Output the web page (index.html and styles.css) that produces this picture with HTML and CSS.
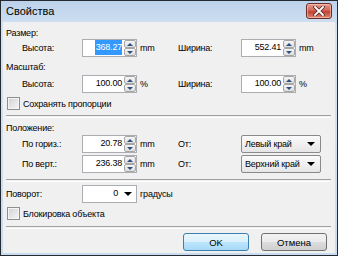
FILE: index.html
```html
<!DOCTYPE html>
<html lang="ru">
  <head>
    <meta charset="UTF-8" />
    <title>Свойства</title>
    <link rel="stylesheet" href="styles.css">
  </head>
  <body>
    <div class="window">
      <div class="titlebar">
        <span class="title">Свойства</span>
        <div class="close">
          <svg width="12" height="10" viewBox="0 0 12 10">
            <path d="M2 1 L10 9 M10 1 L2 9" stroke="#5a2a26" stroke-width="3.4" stroke-linecap="square" />
            <path d="M2 1 L10 9 M10 1 L2 9" stroke="#fff" stroke-width="1.8" stroke-linecap="square" />
          </svg>
        </div>
      </div>

      <div class="content">
        <div class="group">Размер:</div>
        <div class="row">
          <span class="label">Высота:</span>
          <div class="spin">
            <div class="field"><span class="sel">368.27</span></div>
            <div class="arrows"><span class="btn up"></span><span class="btn down"></span></div>
          </div>
          <span class="unit">mm</span>
          <span class="label">Ширина:</span>
          <div class="spin">
            <div class="field">552.41</div>
            <div class="arrows"><span class="btn up"></span><span class="btn down"></span></div>
          </div>
          <span class="unit">mm</span>
        </div>

        <div class="group gap4">Масштаб:</div>
        <div class="row gap2">
          <span class="label">Высота:</span>
          <div class="spin">
            <div class="field">100.00</div>
            <div class="arrows"><span class="btn up"></span><span class="btn down"></span></div>
          </div>
          <span class="unit">%</span>
          <span class="label">Ширина:</span>
          <div class="spin">
            <div class="field">100.00</div>
            <div class="arrows"><span class="btn up"></span><span class="btn down"></span></div>
          </div>
          <span class="unit">%</span>
        </div>

        <label class="check gap4"><span class="box"></span>Сохранять пропорции</label>

        <div class="sep"></div>

        <div class="group gap4">Положение:</div>
        <div class="row gap1">
          <span class="label">По гориз.:</span>
          <div class="spin">
            <div class="field">20.78</div>
            <div class="arrows"><span class="btn up"></span><span class="btn down"></span></div>
          </div>
          <span class="unit">mm</span>
          <span class="label">От:</span>
          <div class="select">Левый край<span class="caret"></span></div>
        </div>
        <div class="row gap2">
          <span class="label">По верт.:</span>
          <div class="spin">
            <div class="field">236.38</div>
            <div class="arrows"><span class="btn up"></span><span class="btn down"></span></div>
          </div>
          <span class="unit">mm</span>
          <span class="label">От:</span>
          <div class="select">Верхний край<span class="caret"></span></div>
        </div>

        <div class="sep sep-mid"></div>

        <div class="row rotate">
          <span class="label">Поворот:</span>
          <div class="combo">
            <div class="field">0</div>
            <span class="caret"></span>
          </div>
          <span class="unit">градусы</span>
        </div>

        <label class="check gap4"><span class="box"></span>Блокировка объекта</label>

        <div class="sep sep-low"></div>

        <div class="buttons">
          <button class="default">OK</button>
          <button>Отмена</button>
        </div>
      </div>
    </div>
  </body>
</html>
```

FILE: styles.css
```css
body {
  margin: 0;
  font-family: "Liberation Sans", Arial, sans-serif;
  font-size: 9px;
  letter-spacing: -0.2px;
  color: #000;
  background: #fff;
}
.window {
  width: 338px;
  height: 256px;
  box-sizing: border-box;
  border: 1px solid #252a30;
  background: linear-gradient(#bcd2ea, #d4e3f3 30px, #c9dbef);
  padding: 0 2px 2px;
  display: flex;
  flex-direction: column;
}
.titlebar {
  height: 21px;
  display: flex;
  align-items: center;
  justify-content: space-between;
  padding: 0 3px;
}
.title {
  font-size: 11px;
  letter-spacing: 0;
  margin-top: -1px;
}
.close {
  width: 24px;
  height: 14px;
  margin-top: -2px;
  border: 1px solid #6b2b27;
  border-radius: 3px;
  background: linear-gradient(#e49a8e, #d3675a 45%, #c0432f 55%, #d98a70);
  box-shadow: inset 0 0 0 1px rgba(255, 220, 210, 0.5);
  display: flex;
  align-items: center;
  justify-content: center;
}
.content {
  flex: 1;
  background: #f0f0f0;
  padding: 5px 3px 0;
  display: flex;
  flex-direction: column;
}
.group {
  line-height: 12px;
  height: 12px;
}
.gap4 { margin-top: 4px; }
.gap2 { margin-top: 2px; }
.gap1 { margin-top: 1px; }
.row {
  display: grid;
  grid-template-columns: 60px 55px 41px 63px max-content auto;
  align-items: center;
  height: 18px;
  padding-left: 16px;
  white-space: nowrap;
}
.row.rotate {
  grid-template-columns: 76px 55px auto;
  padding-left: 0;
  margin-top: 3px;
}
.unit {
  padding-left: 3px;
}
.spin {
  display: flex;
  width: 55px;
  height: 18px;
}
.field {
  flex: 1;
  box-sizing: border-box;
  height: 18px;
  border: 1px solid #abadb3;
  border-right: none;
  background: #fff;
  text-align: right;
  line-height: 15px;
  padding-right: 2px;
}
.sel {
  background: #3399ff;
  color: #fff;
  padding: 2px 0 3px 1px;
}
.arrows {
  width: 13px;
  display: flex;
  flex-direction: column;
  border: 1px solid #abadb3;
  border-left: none;
  box-sizing: border-box;
  background: #fff;
}
.btn {
  flex: 1;
  border: 1px solid #a7a7a7;
  border-radius: 2px;
  background: linear-gradient(#f5f5f5, #dedede);
  display: flex;
  align-items: center;
  justify-content: center;
}
.btn::after {
  content: "";
  border-left: 3px solid transparent;
  border-right: 3px solid transparent;
}
.up::after { border-bottom: 3px solid #2f4f80; }
.down::after { border-top: 3px solid #2f4f80; }
.check {
  display: flex;
  align-items: center;
  height: 13px;
  gap: 3px;
  padding-left: 1px;
}
.box {
  width: 13px;
  height: 13px;
  box-sizing: border-box;
  border: 1px solid #8f8f8f;
  background: linear-gradient(135deg, #cfd1d4, #f7f7f7);
  box-shadow: inset 0 0 0 1px #f4f4f4;
}
.sep {
  margin-top: 5px;
  height: 1px;
  border-top: 1px solid #a0a0a0;
  border-bottom: 1px solid #fff;
  margin-right: 1px;
}
.sep-mid { margin-top: 6px; }
.sep-low { margin-top: 6px; }
.select {
  width: 80px;
  height: 18px;
  box-sizing: border-box;
  border: 1px solid #8a8a8a;
  border-radius: 2px;
  background: linear-gradient(#fbfbfb, #f0f0f0 50%, #e6e6e6);
  display: flex;
  align-items: center;
  justify-content: space-between;
  padding: 0 5px 0 3px;
}
.caret {
  border-left: 4px solid transparent;
  border-right: 4px solid transparent;
  border-top: 4px solid #000;
}
.combo {
  display: flex;
  align-items: center;
  height: 18px;
  box-sizing: border-box;
  border: 1px solid #abadb3;
  background: #fff;
}
.combo .field {
  border: none;
  height: 16px;
  padding-right: 6px;
}
.combo .caret {
  margin-right: 4px;
}
.buttons {
  display: flex;
  justify-content: flex-end;
  gap: 12px;
  margin-top: 4px;
  padding-right: 5px;
}
button {
  width: 66px;
  height: 18px;
  font-family: "Liberation Sans", Arial, sans-serif;
  font-size: 9.5px;
  color: #000;
  border: 1px solid #707070;
  border-radius: 3px;
  background: linear-gradient(#f2f2f2, #ebebeb 50%, #dddddd 51%, #cfcfcf);
  padding: 0;
}
button.default {
  border-color: #3c7fb1;
  background: linear-gradient(#eaf6fd, #d9f0fc 50%, #bee6fd 51%, #a7d9f5);
}
```
